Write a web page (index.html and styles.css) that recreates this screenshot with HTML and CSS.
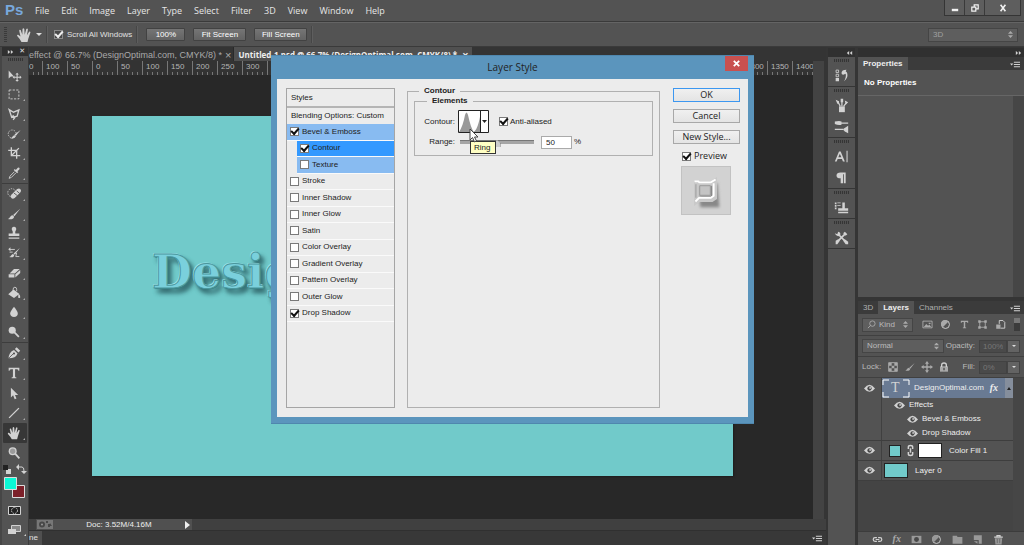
FILE: index.html
```html
<!DOCTYPE html>
<html lang="en">
<head>
<meta charset="utf-8">
<title>Photoshop - Layer Style</title>
<link rel="stylesheet" href="styles.css">
</head>
<body>
<svg class="sprite" aria-hidden="true">
<symbol id="move" viewBox="0 0 18 18"><path d="M3 4v9l2.500-2.300H9z"/><path d="M12.500 6.500l2 2h-1.400v2.400h2.400V9.500l2 2-2 2v-1.400h-2.400v2.400h1.400l-2 2-2-2h1.400v-2.400H9.500v1.400l-2-2 2-2v1.400h2.400V8.500h-1.400z"/></symbol>
<symbol id="marquee" viewBox="0 0 18 18"><rect class="line" x="3.500" y="4.500" width="11" height="10" stroke-dasharray="2.500 1.500"/></symbol>
<symbol id="lasso" viewBox="0 0 18 18"><path class="line thick" d="M3.500 4l5 3 6-2.500-2 7-6 1.500zM6.500 13l1.500-2 2 2-2 2.500"/></symbol>
<symbol id="quick" viewBox="0 0 18 18"><circle class="line" cx="7" cy="9" r="4.500" stroke-dasharray="1.500 1.300"/><path d="M16.500 4.500L11 11l-1.500-1.500zM10 10.300l1 1c-1 3-4 2.900-6 2.500 2-.5 2.500-3.500 5-3.500z"/></symbol>
<symbol id="crop" viewBox="0 0 18 18"><path class="line thick" d="M6 2.500V12h10M2.500 6H12v9.500M14.500 3.500l-8 8"/></symbol>
<symbol id="dropper" viewBox="0 0 18 18"><path d="M10 4.500l1 1 2.300-2.500q3-.5 1.700 2L12.800 7l1 1-1.300 1.300L8.700 5.700z"/><path class="line" d="M9.500 7.500l-5 5-1 2.500 2.500-1 5-5"/></symbol>
<symbol id="heal" viewBox="0 0 18 18"><circle class="line" cx="6.500" cy="7.500" r="4.500" stroke-dasharray="1.500 1.300"/><path d="M12.500 3.500q3-2 4.300 1 .5 1.500-1 3l-6 6q-3 2-4.500-1-.5-1.500 1-3z"/><path class="dark" d="M9 8l4 3M12 5.500l3.500 3"/></symbol>
<symbol id="brush" viewBox="0 0 18 18"><path d="M16 3L9.500 11.500 8 10zM7.500 10.300l1.700 1.700c-.7 3.300-4.500 3-7.200 2.500 2.500-.5 2.500-4 5.500-4.200z"/></symbol>
<symbol id="stamp" viewBox="0 0 18 18"><path d="M9 2a2.600 2.600 0 0 1 2 4.200Q10 7.500 10.500 9.500H15v3H3v-3h4.500Q8 7.500 7 6.200A2.600 2.600 0 0 1 9 2zM3 14h12v1.500H3z"/></symbol>
<symbol id="history" viewBox="0 0 18 18"><path d="M15.500 3.500L10 11l-1.500-1.300zM8 10l1.300 1.500C8.500 14.500 6 14 3.500 13.500 6 13 6 10 8 10z"/><path class="line" d="M4 5h6M4 8h3.500M12 9l-1 4h4"/><path d="M5 2.500V7L2.500 4.800z"/></symbol>
<symbol id="eraser" viewBox="0 0 18 18"><path d="M9 4.500h6.500L10 9.500H4zM3 10.500h6.500V14H3zM10.500 10.300L16 5.500v3.500l-5.500 5z"/></symbol>
<symbol id="bucket" viewBox="0 0 18 18"><path d="M8.500 5l6.500 5-6 4.500-6.500-4z"/><path class="line" d="M8 9V5q0-2.500 2-2.500T12 5v2"/><path d="M14 9.500q2.500 2 2 4.500-1.200 1.500-2.300 0z"/></symbol>
<symbol id="blur" viewBox="0 0 18 18"><path d="M9 3q4.500 5.500 4.300 8Q13 14.500 9 14.500T4.700 11Q4.500 8.500 9 3z"/></symbol>
<symbol id="dodge" viewBox="0 0 18 18"><circle cx="7" cy="7" r="4"/><path class="line fat" d="M9.500 9.500l5 5"/></symbol>
<symbol id="pen" viewBox="0 0 18 18"><path d="M3 15q0-7 6-9.500l4 4Q11 15 3 15zM10 4.500l2-2 4 4-2 2z"/><path class="dark" d="M3.500 14.500l5-5"/><circle class="hole" cx="9" cy="9.500" r="1.100"/></symbol>
<symbol id="type" viewBox="0 0 18 18"><path d="M3 3h12v3.500h-1Q13.900 4.800 12.500 4.800H10.200V13q0 1 1.500 1v1h-5.400v-1q1.500 0 1.500-1V4.800H5.500Q4.100 4.800 4 6.500H3z"/></symbol>
<symbol id="arrow" viewBox="0 0 18 18"><path d="M5.500 3v11l2.500-2.400L9.800 16l2-.8-1.700-4h3.600z"/></symbol>
<symbol id="line" viewBox="0 0 18 18"><path class="line thick" d="M3.500 14.500l11-11"/></symbol>
<symbol id="hand" viewBox="0 0 18 18"><path d="M6.500 16Q5 13 2.200 10q-.6-1.500 1-1.300L5.500 10.400 4.200 4.800q.1-1.500 1.500-.7l1.600 4.700L7.500 3q.8-1.400 1.800 0l.4 5.700L11.300 3q1.200-1 1.600.4l-1 5.800 2.200-3.500q1.300-.6 1.300.8l-2.100 6.300L12.500 16z"/></symbol>
<symbol id="zoom" viewBox="0 0 18 18"><circle cx="7.500" cy="7" r="4.500"/><circle class="hole" cx="7.500" cy="7" r="3" opacity=".4"/><path class="line fat" d="M10.500 10l4.500 5"/></symbol>
<symbol id="eye" viewBox="0 0 18 18"><path d="M0 9q9-12 18 0-9 11-18 0z"/><circle class="hole" cx="9" cy="9" r="3.500"/><circle cx="10" cy="8" r="1.500"/></symbol>
<symbol id="fold" viewBox="0 0 18 18"><path d="M8 3v12L1 9zM17 3v12l-7-6z"/></symbol>
<symbol id="panelmenu" viewBox="0 0 18 12"><path d="M0 4h6L3 8zM7 1h11v2H7zM7 5h11v2H7zM7 9h11v2H7z"/></symbol>
<symbol id="hist" viewBox="0 0 18 18"><path class="line" d="M2.500 2.500h3v3h-3zM2.500 7.500h3v3h-3z"/><path d="M2 12h4v4H2zM15 2Q9 2 9 6q0 2 2 2l3-1q1 4-2 9 5-4 4-9-.3-2-2-3z"/></symbol>
<symbol id="presets" viewBox="0 0 18 18"><path d="M6 10h7v7H6z"/><path class="line thick" d="M7.500 10L5 5M9.500 10V3M11.500 10l3-4"/><path d="M2 2l4 2v3H4zM8 1h3v4H8zM13 3l4 2-3 3z"/></symbol>
<symbol id="brushes" viewBox="0 0 18 18"><path class="line thick" d="M8 5h9M1 12.500h10"/><path d="M1 3q6-1 8 0v4Q5 8 1 6zM11 12l6-4v9q-5-2-6-4z"/></symbol>
<symbol id="char" viewBox="0 0 18 18"><path d="M1 15L6 3h2l5 12h-2.300l-1.200-3H4.400l-1.200 3zM5.200 10h3.600L7 5.700zM15 2h1.300v14H15z"/></symbol>
<symbol id="para" viewBox="0 0 18 18"><path d="M14 3v13h-2V5h-1v11H8v-6Q3 10 3 6.500T8 3z"/></symbol>
<symbol id="clone" viewBox="0 0 18 18"><path d="M10 3h3v7h4v3H5v-3h5zM5 14h12v2H5zM1 3h2v2H1zM1 6h2v2H1zM1 9h2v2H1zM4 3h4v1H4zM4 6h4v1H4z"/></symbol>
<symbol id="tools" viewBox="0 0 18 18"><path class="line fat" d="M4.500 4.500l10 10M14 4L5 13"/><path d="M1 4l3 1 1-3q4 1 2 5-4 2-6-3zM13 2l3 3-2 2-3-3zM2 13l3-2 2 2-3 4H2zM13 11l4 3v3h-3l-3-4z"/></symbol>
<symbol id="image" viewBox="0 0 18 18"><path class="line" d="M1.500 3.500h15v11h-15z"/><path d="M3 13l4-5 3 3 2-2 3 4zM11 6h3v2h-3z"/></symbol>
<symbol id="adjust" viewBox="0 0 18 18"><circle class="line thick" cx="9" cy="9" r="6.500"/><path d="M13.500 4.500A6.500 6.500 0 1 0 4.500 13.500z"/></symbol>
<symbol id="shape" viewBox="0 0 18 18"><path class="line" d="M4 4.500h10M4 13.500h10M4.500 4v10M13.500 4v10"/><path d="M2 2h4v4H2zM12 2h4v4h-4zM2 12h4v4H2zM12 12h4v4h-4z"/></symbol>
<symbol id="smart" viewBox="0 0 18 18"><path class="line thick" d="M7 8V2.500h6l3 3V15H9"/><path d="M2 9h7v7H2z"/></symbol>
<symbol id="checker" viewBox="0 0 18 18"><path class="line" d="M2.500 2.500h13v13h-13z"/><path d="M3 3h4v4H3zM11 3h4v4h-4zM7 7h4v4H7zM3 11h4v4H3zM11 11h4v4h-4z"/></symbol>
<symbol id="lock" viewBox="0 0 18 18"><path d="M3 8h12v8H3z"/><path class="line fat" d="M5.500 9V6Q5.500 3 9 3t3.500 3v3"/><path class="hole" d="M8 10h2v4H8z"/></symbol>
<symbol id="cross" viewBox="0 0 18 18"><path d="M9 0l3 4h-2v4h4V6l4 3-4 3v-2h-4v4h2l-3 4-3-4h2v-4H4v2L0 9l4-3v2h4V4H6z"/></symbol>
<symbol id="link" viewBox="0 0 18 18"><path class="line fat" d="M8 6H5Q2 6 2 9t3 3h3M10 6h3q3 0 3 3t-3 3h-3M6 9h6"/></symbol>
<symbol id="chain" viewBox="0 0 12 18"><path class="line fat" d="M3 7V4q0-2 3-2t3 2v3M3 11v3q0 2 3 2t3-2v-3M6 6v6"/></symbol>
<symbol id="mask" viewBox="0 0 18 18"><path d="M1 3h16v12H1z"/><circle class="hole" cx="9" cy="9" r="4"/></symbol>
<symbol id="folder" viewBox="0 0 18 18"><path d="M1 3h7l1 2h8v11H1z"/></symbol>
<symbol id="newlayer" viewBox="0 0 18 18"><path d="M3 2h13v14h-5v-6H3z"/><path d="M3 12h6v4z"/></symbol>
<symbol id="trash" viewBox="0 0 18 18"><path d="M3 7h12l-1 10H4z"/><path class="line fat" d="M2 5h14M6.500 4V2.500h5V4"/><path class="dark" d="M7 8v7M11 8v7"/></symbol>
</svg>

<div class="app">
<header class="menubar">
  <span class="logo">Ps</span>
  <nav class="menus"><a href="#">File</a><a href="#">Edit</a><a href="#">Image</a><a href="#">Layer</a><a href="#">Type</a><a href="#">Select</a><a href="#">Filter</a><a href="#">3D</a><a href="#">View</a><a href="#">Window</a><a href="#">Help</a></nav>
  <div class="winbuttons">
    <button aria-label="Minimize"><svg viewBox="0 0 10 10"><path d="M1 6h8v3H1z"/></svg></button>
    <button aria-label="Restore"><svg viewBox="0 0 10 10"><path class="line thick" d="M4 4V1h5v5H6M1 4h5v5H1z"/></svg></button>
    <button class="wide" aria-label="Close"><svg viewBox="0 0 10 10"><path class="line fat" d="M2 1l6 8M8 1L2 9"/></svg></button>
  </div>
</header>

<div class="options">
  <i class="vgrip"></i>
  <svg class="handicon"><use href="#hand"/></svg>
  <i class="caret"></i>
  <i class="rule"></i>
  <label class="scroll"><input type="checkbox" class="check darkcheck" checked>Scroll All Windows</label>
  <i class="rule"></i>
  <div class="optbuttons"><button class="opt small">100%</button><button class="opt">Fit Screen</button><button class="opt">Fill Screen</button></div>
  <i class="rule last"></i>
  <div class="sel workspace"><select aria-label="Workspace"><option>3D</option></select><i class="updown"></i></div>
</div>

<main class="main">
  <aside class="toolbar">
    <div class="strip toolstrip"><svg class="flip"><use href="#fold"/></svg><span>✕</span></div>
    <i class="grip"></i>
    <div class="tools g1">
      <button aria-label="Move"><svg><use href="#move"/></svg></button>
      <button class="more" aria-label="Marquee"><svg><use href="#marquee"/></svg></button>
      <button class="more" aria-label="Lasso"><svg><use href="#lasso"/></svg></button>
      <button class="more" aria-label="Quick Selection"><svg><use href="#quick"/></svg></button>
      <button class="more" aria-label="Crop"><svg><use href="#crop"/></svg></button>
      <button class="more" aria-label="Eyedropper"><svg><use href="#dropper"/></svg></button>
    </div>
    <div class="tools g2">
      <button class="more" aria-label="Healing Brush"><svg><use href="#heal"/></svg></button>
      <button class="more" aria-label="Brush"><svg><use href="#brush"/></svg></button>
      <button class="more" aria-label="Clone Stamp"><svg><use href="#stamp"/></svg></button>
      <button class="more" aria-label="History Brush"><svg><use href="#history"/></svg></button>
      <button class="more" aria-label="Eraser"><svg><use href="#eraser"/></svg></button>
      <button class="more" aria-label="Paint Bucket"><svg><use href="#bucket"/></svg></button>
      <button class="more" aria-label="Blur"><svg><use href="#blur"/></svg></button>
      <button class="more" aria-label="Dodge"><svg><use href="#dodge"/></svg></button>
    </div>
    <div class="tools g3">
      <button class="more" aria-label="Pen"><svg><use href="#pen"/></svg></button>
      <button class="more" aria-label="Type"><svg><use href="#type"/></svg></button>
      <button class="more" aria-label="Path Selection"><svg><use href="#arrow"/></svg></button>
      <button class="more" aria-label="Line"><svg><use href="#line"/></svg></button>
      <button class="more on" aria-label="Hand"><svg><use href="#hand"/></svg></button>
      <button aria-label="Zoom"><svg><use href="#zoom"/></svg></button>
    </div>
    <svg class="swatches" viewBox="0 0 26 76">
      <path d="M4 6h5v5H4z"/><path class="blk" d="M1 2h5v5H1z"/><path class="line" d="M16 4h4q2 0 2 4"/><path d="M17 1v6l-3-3zM19 8h6l-3 3z"/>
      <path class="back" d="M10.500 22.500h12v12h-12z"/><path class="front" d="M2.500 14.500h12v12h-12z"/>
      <path class="line" d="M6.500 43.500h12v8h-12z"/><path class="blk" d="M7 44h11v7H7z"/><circle class="line" cx="12.500" cy="47.500" r="3" stroke-dasharray="1.500 1"/>
      <path class="line" d="M9.500 62.500h9v6h-9z"/><path class="grey" d="M10 63h8v5h-8z"/><path d="M6 66h8v5H6zM24 71v2h-2z"/>
    </svg>
  </aside>

  <section class="document">
    <div class="tabs">
      <div class="tab">effect @ 66.7% (DesignOptimal.com, CMYK/8) *<span>×</span></div>
      <div class="tab active">Untitled-1.psd @ 66.7% (DesignOptimal.com, CMYK/8) *<span>×</span></div>
    </div>
    <div class="work">
      <div class="view">
        <div class="ruler"><b>0</b><b>100</b><b>50</b><b>0</b><b>50</b><b>100</b><b>150</b><b>200</b><b>250</b><b>300</b><b>350</b><b>400</b><b>450</b><b>500</b><b>550</b><b>600</b><b>650</b><b>700</b><b>750</b><b>800</b><b>850</b><b>900</b><b>950</b><b>1000</b><b>1050</b><b>1100</b><b>1150</b><b>1200</b><b>1250</b><b>1300</b><b>1350</b><b>1400</b></div>
        <div class="stage"><div class="canvas"><span class="art">Desig</span></div></div>
      </div>
      <div class="vscroll"></div>
    </div>
    <div class="status">
      <div class="info"><svg class="pager" viewBox="0 0 16 9"><circle class="hole" cx="5" cy="4.500" r="3"/><circle cx="5" cy="4.500" r="1"/><path class="hole" d="M9 1h2v2H9zM11 4h2v3h-2zM13 3l2 3h-3z"/></svg><span>Doc: 3.52M/4.16M</span><i class="play"></i></div>
    </div>
    <div class="timeline"><span>ne</span><svg class="pm"><use href="#panelmenu"/></svg></div>
  </section>

  <aside class="icons">
    <div class="strip"><svg><use href="#fold"/></svg></div>
    <div class="ig"><i class="grip"></i><svg><use href="#hist"/></svg></div>
    <div class="ig"><i class="grip"></i><svg><use href="#presets"/></svg><svg><use href="#brushes"/></svg></div>
    <div class="ig"><i class="grip"></i><svg><use href="#char"/></svg><svg><use href="#para"/></svg></div>
    <div class="ig"><i class="grip"></i><svg><use href="#clone"/></svg></div>
    <div class="ig"><i class="grip"></i><svg><use href="#tools"/></svg></div>
    <div class="ig"></div>
  </aside>

  <aside class="panels">
    <div class="strip"><svg class="flip"><use href="#fold"/></svg></div>
    <section class="properties">
      <div class="ptabs"><span class="cur">Properties</span><svg class="pm"><use href="#panelmenu"/></svg></div>
      <h2>No Properties</h2>
      <div class="pbody"></div>
    </section>
    <section class="layers">
      <div class="ptabs"><span>3D</span><span class="cur">Layers</span><span>Channels</span><svg class="pm"><use href="#panelmenu"/></svg></div>
      <div class="prow filter">
        <div class="sel kind"><svg viewBox="0 0 10 10"><circle class="line" cx="6" cy="4" r="3"/><path class="line" d="M4 6L1 9"/></svg><select aria-label="Filter"><option>Kind</option></select><i class="updown"></i></div>
        <div class="fi"><svg><use href="#image"/></svg><svg><use href="#adjust"/></svg><svg><use href="#type"/></svg><svg><use href="#shape"/></svg><svg><use href="#smart"/></svg></div>
        <i class="toggle"></i>
      </div>
      <div class="prow">
        <div class="sel blend"><select aria-label="Blend mode"><option>Normal</option></select><i class="updown"></i></div>
        <label class="pl" for="opacity">Opacity:</label><input id="opacity" class="num" value="100%"><button class="drop" aria-label="Opacity slider"><i class="caret"></i></button>
      </div>
      <div class="prow">
        <span>Lock:</span>
        <div class="locks"><svg><use href="#checker"/></svg><svg><use href="#brush"/></svg><svg><use href="#cross"/></svg><svg><use href="#lock"/></svg></div>
        <label class="pl" for="fill">Fill:</label><input id="fill" class="num" value="0%"><button class="drop" aria-label="Fill slider"><i class="caret"></i></button>
      </div>
      <div class="list">
        <div class="layer">
          <svg class="eye"><use href="#eye"/></svg>
          <div class="row selected"><svg class="ttype" viewBox="0 0 28 19"><path class="line" d="M1 6V1h6M21 1h6v5M27 13v5h-6M7 18H1v-5"/><text x="9" y="13">T</text></svg><span>DesignOptimal.com</span><em>fx</em><i class="up"></i></div>
        </div>
        <div class="layer effects">
          <span></span>
          <ul><li><svg><use href="#eye"/></svg>Effects</li><li class="sub"><svg><use href="#eye"/></svg>Bevel &amp; Emboss</li><li class="sub"><svg><use href="#eye"/></svg>Drop Shadow</li></ul>
        </div>
        <div class="layer">
          <svg class="eye"><use href="#eye"/></svg>
          <div class="row"><i class="fillthumb"></i><svg class="chain"><use href="#chain"/></svg><i class="thumb white"></i><span>Color Fill 1</span></div>
        </div>
        <div class="layer">
          <svg class="eye"><use href="#eye"/></svg>
          <div class="row"><i class="thumb"></i><span>Layer 0</span></div>
        </div>
      </div>
      <div class="pfoot"><svg><use href="#link"/></svg><em>fx</em><svg><use href="#mask"/></svg><svg><use href="#adjust"/></svg><svg><use href="#folder"/></svg><svg><use href="#newlayer"/></svg><svg><use href="#trash"/></svg></div>
    </section>
  </aside>
</main>
</div>

<div class="dialog" role="dialog" aria-labelledby="dtitle">
  <div class="titlebar"><h1 id="dtitle">Layer Style</h1><button class="close" aria-label="Close"><svg viewBox="0 0 10 10"><path class="line fat" d="M2 2l6 6M8 2L2 8"/></svg></button></div>
  <div class="dbody">
    <div class="styles">
      <div class="shead">Styles</div>
      <div class="sblend">Blending Options: Custom</div>
      <div class="srows">
        <label class="lit"><input type="checkbox" class="check" checked>Bevel &amp; Emboss</label>
        <label class="lit in picked"><input type="checkbox" class="check" checked>Contour</label>
        <label class="lit in"><input type="checkbox" class="check">Texture</label>
        <label><input type="checkbox" class="check">Stroke</label>
        <label><input type="checkbox" class="check">Inner Shadow</label>
        <label><input type="checkbox" class="check">Inner Glow</label>
        <label><input type="checkbox" class="check">Satin</label>
        <label><input type="checkbox" class="check">Color Overlay</label>
        <label><input type="checkbox" class="check">Gradient Overlay</label>
        <label><input type="checkbox" class="check">Pattern Overlay</label>
        <label><input type="checkbox" class="check">Outer Glow</label>
        <label><input type="checkbox" class="check" checked>Drop Shadow</label>
      </div>
    </div>
    <fieldset class="outer"><legend>Contour</legend>
      <fieldset class="inner"><legend>Elements</legend>
        <div class="frow tall"><span class="fl">Contour:</span>
          <button class="contour" aria-label="Contour"><svg viewBox="0 0 31 23"><path class="curve" d="M1 22Q5 16 7 5q1.500-5 3 0 3 14 6 17zM15 22q5-1 8-21v21z"/><path class="frame" d="M.500 .500h30v22H.500zM22.500 0v23"/><path class="blk" d="M24 10h5l-2.500 3z"/></svg></button>
          <label class="anti"><input type="checkbox" class="check" checked>Anti-aliased</label>
        </div>
        <div class="frow"><label class="fl" for="range">Range:</label><input id="range" class="range" type="range" value="50"><input class="val" aria-label="Range value" value="50"><span>%</span></div>
        <div class="tip">Ring</div>
        <svg class="cursor" viewBox="0 0 10 15"><path d="M1 1v11l2.500-2.500L5.500 14l2-1-2-4H9z"/></svg>
      </fieldset>
    </fieldset>
    <div class="actions">
      <button class="ok">OK</button><button>Cancel</button><button>New Style...</button>
      <label><input type="checkbox" class="check" checked>Preview</label>
      <svg class="sample" viewBox="0 0 50 49"><defs><filter id="soft"><feGaussianBlur stdDeviation="1.500"/></filter></defs><path class="sshadow" filter="url(#soft)" d="M17 20l20-3 2 25H19z"/><path class="sring" d="M15 17h16l3-2v17l-3 2H18l-3 2z"/><path class="score" d="M18 19h12v11H18z"/><path class="shi" d="M13 15h4l1 1h12l5-3M33 17v13l-3 2H18l-4 4"/><path class="slo" d="M18.500 19.500h11v10h-11zM14.500 18v14"/></svg>
    </div>
  </div>
</div>
</body>
</html>
```

FILE: styles.css
```css
* { box-sizing: border-box; }
body { margin: 0; background: #535353; color: #e0e0e0; font: 8px/12px "Liberation Sans", Arial, sans-serif; overflow: hidden; }
button, input, select { font: inherit; color: inherit; margin: 0; padding: 0; border: 0; background: none; border-radius: 0; }
svg { display: block; fill: #d2d2d2; flex: none; }
.sprite { position: absolute; width: 0; height: 0; }
.line { fill: none; stroke: #d2d2d2; stroke-width: 1; }
.thick { stroke-width: 1.5; }
.fat { stroke-width: 2; }
.dark { fill: none; stroke: #535353; }
.hole { fill: #484848; }
.blk { fill: #222; }
.app { min-height: 100vh; display: flex; flex-direction: column; }

.menubar { display: flex; height: 22px; align-items: flex-start; border-bottom: 1px solid #3a3a3a; }
.logo { width: 31px; padding-left: 5px; color: #78a8dc; font: bold 15px/20px "Liberation Sans", sans-serif; }
.menus { flex: 1; display: flex; gap: 12px; padding-left: 4px; font: 9px/21px "Open Sans", "Noto Sans", sans-serif; }
.menus a { color: #e6e6e6; text-decoration: none; }
.winbuttons { display: flex; margin-right: 3px; border: 1px solid #353535; border-top: 0; background: #5e5e5e; }
.winbuttons button { width: 20px; height: 15px; display: grid; place-items: center; border-right: 1px solid #3a3a3a; }
.winbuttons .wide { width: 35px; border: 0; }
.winbuttons svg { width: 8px; height: 8px; fill: #f2f2f2; }
.winbuttons .line { stroke: #f2f2f2; }

.options { display: flex; align-items: center; height: 25px; border-top: 1px solid #646464; border-bottom: 1px solid #3a3a3a; padding: 0 6px 0 4px; }
.vgrip { width: 3px; height: 16px; background: repeating-linear-gradient(#3a3a3a 0 1px, transparent 1px 2px); }
.handicon { width: 18px; height: 18px; margin-left: 8px; }
.caret { border: 3px solid transparent; border-top-color: #ddd; border-bottom: 0; }
.options > .caret { margin-left: 3px; }
.rule { width: 2px; height: 17px; margin: 0 6px 0 4px; background: #464646; border-right: 1px solid #5e5e5e; }
.scroll { display: flex; align-items: center; gap: 4px; }
.optbuttons { display: flex; gap: 8px; padding-left: 2px; }
.opt { width: 53px; height: 13px; line-height: 11px; background: linear-gradient(#757575, #636363); border: 1px solid #424242; border-radius: 1px; color: #fff; }
.opt.small { width: 39px; }
.workspace { width: 90px; margin-left: auto; color: #a0a0a0; }
.sel { position: relative; display: flex; align-items: center; height: 14px; padding: 0 4px; background: #5e5e5e; border: 1px solid #454545; }
.sel select { appearance: none; flex: 1; min-width: 0; line-height: 12px; outline: 0; }
.updown { width: 5px; height: 7px; clip-path: polygon(50% 0, 100% 40%, 0 40%, 0 60%, 100% 60%, 50% 100%, 0 60%, 0 40%); background: #aaa; }

.check { appearance: none; width: 9px; height: 9px; border: 1px solid #7a7a7a; background: #fff; display: grid; place-items: center; flex: none; }
.check:checked::before { content: ""; width: 6px; height: 3px; border: solid #111; border-width: 0 0 2px 2px; transform: rotate(-48deg); margin-bottom: 2px; }
.darkcheck { background: #4a4a4a; border-color: #8a8a8a; }
.darkcheck:checked::before { border-color: #eee; }

.main { flex: 1; display: grid; grid-template-columns: 29px minmax(0, 1fr) 31px 167px; background: #3a3a3a; }
.strip { height: 9px; background: #303030; display: flex; justify-content: flex-end; align-items: center; padding-right: 2px; }
.strip svg { width: 7px; height: 6px; }
.flip { transform: scaleX(-1); }
.toolbar { background: #535353; border-left: 2px solid #464646; border-right: 1px solid #3b3b3b; }
.toolstrip { justify-content: space-between; padding: 0 3px 0 5px; font: 7px/9px "DejaVu Sans", sans-serif; }
.grip { display: block; width: 15px; height: 3px; margin: 2px auto 0; background: repeating-linear-gradient(90deg, #353535 0 1px, #505050 1px 2px); }
.tools { display: grid; grid-auto-rows: 1fr; padding: 0 1px; }
.tools + .tools { border-top: 1px solid #3d3d3d; }
.g1 { height: 118px; margin-top: 4px; }
.g2 { height: 159px; }
.g3 { height: 121px; }
.tools button { position: relative; display: grid; place-items: center; }
.tools svg { width: 16px; height: 16px; margin-right: 2px; }
.tools .on { background: #373737; border-radius: 1px; }
.more::after { content: ""; position: absolute; right: 2px; bottom: 3px; border: 1px solid #aaa; border-top-color: transparent; border-left-color: transparent; }
.swatches { width: 26px; height: 76px; }
.front { fill: #0cf7d5; stroke: #ddd; }
.back { fill: #7c2029; stroke: #ddd; }
.grey { fill: #888; }

.document { display: flex; flex-direction: column; min-width: 0; }
.tabs { display: flex; height: 14px; font-size: 9px; line-height: 16px; white-space: nowrap; overflow: hidden; background: #343434; }
.tab { display: flex; gap: 3px; padding-right: 2px; color: #a9a9a9; }
.tab.active { font: bold 8px/16px "Open Sans", "Noto Sans", sans-serif; gap: 5px; background: #505050; color: #eee; padding: 0 4px; border-left: 1px solid #2a2a2a; }
.tab span { font-size: 11px; }
.work { flex: 1; display: flex; min-height: 0; }
.view { flex: 1; min-width: 0; background: #282828; }
.vscroll { width: 13px; background: #434343; border-right: 2px solid #353535; }
.ruler { display: flex; height: 14px; overflow: hidden; background: #333; color: #b5b5b5; }
.ruler b { flex: none; width: 25px; padding-left: 3px; font-weight: normal; line-height: 11px; border-left: 1px solid #777; background: repeating-linear-gradient(90deg, #777 0 1px, transparent 1px 5px) 4px bottom/100% 3px no-repeat; }
.ruler b:first-child { width: 13px; padding: 0; border: 0; }
.stage { padding: 41px 80px 43px 63px; }
.canvas { height: 360px; overflow: hidden; background: #71caca; box-shadow: 1px 1px 2px #1c1c1c; padding: 126px 0 0 60px; }
.art { display: block; font: bold 46px/60px "DejaVu Serif", serif; color: #7ad0dc; -webkit-text-stroke: 1px #4a979d; text-shadow: -1px -1px 0 #9de4ec, 1px 1px 1px #347c80, 3px 4px 4px #397276, 4px 5px 5px #3f8184; white-space: nowrap; }
.status { height: 12px; padding-left: 7px; background: #404040; border-bottom: 1px solid #303030; }
.info { width: 156px; height: 11px; display: flex; align-items: center; justify-content: space-between; padding: 0 2px 0 1px; background: #505050; line-height: 11px; color: #eee; }
.pager { width: 16px; height: 9px; background: #777; fill: #999; }
.play { border: 4px solid transparent; border-left: 5px solid #eee; border-right: 0; }
.timeline { height: 15px; display: flex; justify-content: space-between; align-items: center; padding-right: 4px; background: #383838; border-bottom: 1px solid #555; }
.timeline span { width: 13px; background: #505050; line-height: 14px; }
.pm { width: 10px; height: 7px; }

.icons { padding: 1px 2px 0; background: #353535; display: flex; flex-direction: column; }
.ig { display: grid; justify-items: center; gap: 6px; padding-bottom: 3px; margin-bottom: 1px; background: #535353; }
.ig svg { width: 15px; height: 15px; }
.ig:last-child { flex: 1; }
.icons .strip { flex: none; }

.panels { display: flex; flex-direction: column; background: #353535; padding: 1px 0 0 1px; }
.ptabs { display: flex; height: 13px; line-height: 13px; background: #3b3b3b; color: #b0b0b0; padding-right: 4px; }
.ptabs span { padding: 0 5px; }
.ptabs .cur { background: #535353; color: #eee; font-weight: bold; }
.ptabs .pm { margin: 4px 0 0 auto; }
.properties { flex: 1; display: flex; flex-direction: column; margin-bottom: 4px; background: #535353; }
.properties h2 { margin: 0; padding-left: 6px; font-size: 8px; line-height: 25px; color: #fff; border-bottom: 1px solid #666; }
.pbody { flex: 1; border-right: 11px solid #464646; }
.layers { background: #535353; }
.prow { display: flex; align-items: center; height: 21px; padding: 0 4px; border-bottom: 1px solid #404040; color: #bbb; }
.filter { height: 22px; }
.kind { width: 51px; gap: 3px; }
.kind svg { width: 9px; height: 9px; }
.fi { flex: 1; display: flex; justify-content: space-between; padding: 0 8px 0 9px; }
.fi svg { width: 11px; height: 11px; fill: #aaa; }
.toggle { width: 6px; height: 13px; background: linear-gradient(#777 35%, #3b3b3b 35%); }
.blend { width: 82px; }
.pl { margin-left: auto; padding-right: 4px; }
.num { width: 28px; height: 13px; padding: 0 3px; background: #4a4a4a; border: 1px solid #424242; color: #777; }
.drop { width: 13px; height: 13px; display: grid; place-items: center; background: #636363; border: 1px solid #444; }
.drop .caret { border-width: 2px 2px 0; }
.locks { display: flex; gap: 5px; padding-left: 6px; }
.locks svg { width: 12px; height: 12px; fill: #aaa; }
.list { height: 153px; background: #444; border-right: 11px solid #464646; }
.layer { display: grid; grid-template-columns: 23px 1fr; min-height: 20px; background: #535353; border-bottom: 1px solid #3e3e3e; }
.layer:first-child { border: 0; }
.eye { width: 11px; height: 11px; align-self: center; justify-self: center; }
.row { display: flex; align-items: center; border-left: 1px solid #404040; color: #eee; }
.selected { background: #697a93; }
.ttype { width: 28px; height: 19px; }
.layers .line { stroke: #aaa; }
.layers .ttype .line { stroke: #fff; }
.ttype text { font: 14px "Liberation Serif", serif; }
.selected span { margin-left: 4px; }
.row em, .pfoot em { font: italic bold 10px/12px "Liberation Serif", serif; }
.row em { margin-left: auto; margin-right: 7px; }
.up { align-self: stretch; width: 8px; background: #858e9c; display: grid; place-items: center; }
.up::before { content: ""; border: 2px solid transparent; border-top: 0; border-bottom: 3px solid #222; }
.layer ul { margin: 0; padding: 0 0 0 12px; list-style: none; border-left: 1px solid #404040; }
.layer li { display: flex; align-items: center; gap: 4px; height: 14px; color: #eee; }
.layer li svg { width: 11px; height: 11px; }
.layer .sub { padding-left: 13px; }
.thumb { width: 24px; height: 15px; margin: 0 7px 0 2px; background: #71caca; border: 1px solid #222; }
.thumb.white { margin-left: 0; background: #fff; }
.fillthumb { width: 12px; height: 12px; margin-left: 7px; background: #71caca; border: 1px solid #222; }
.chain { width: 9px; height: 13px; margin: 0 3px 0 5px; }
.pfoot { height: 15px; display: flex; align-items: center; justify-content: space-between; padding: 0 20px 0 14px; color: #aaa; border-top: 1px solid #3c3c3c; }
.pfoot svg { width: 11px; height: 11px; fill: #999; }

.dialog { position: absolute; left: 271px; top: 55px; width: 483px; padding: 0 6px 6px; background: #5b95bd; border: 1px solid #4f87ae; border-width: 1px 0; color: #222; }
.titlebar { position: relative; height: 23px; }
.titlebar h1 { margin: 0; text-align: center; font: 10px/22px "Open Sans", "Noto Sans", sans-serif; }
.close { position: absolute; right: 0; top: 0; width: 23px; height: 15px; background: #c9504f; display: grid; place-items: center; }
.close svg { width: 9px; height: 9px; }
.close .line { stroke: #fff; }
.dbody { display: grid; grid-template-columns: 109px 1fr 67px; column-gap: 13px; min-height: 338px; padding: 9px 8px 9px 9px; background: #ececec; }
.styles { border: 1px solid #a5a5a5; }
.shead, .sblend { padding-left: 4px; line-height: 17px; }
.sblend { line-height: 16px; }
.shead { border-bottom: 2px solid #b5b5b5; }
.srows { display: grid; grid-auto-rows: 1fr; height: 198px; }
.srows label { display: flex; align-items: center; gap: 3px; padding-left: 3px; border-bottom: 1px solid #fafafa; }
.srows .lit { background: #88bbf1; }
.srows .in { margin-left: 10px; }
.srows .picked { background: #3399ff; }
fieldset { min-width: 0; margin: 0; border: 1px solid #b0b0b0; }
legend { padding: 0 5px; font-weight: bold; line-height: 10px; }
.outer { padding: 0 6px; margin-top: -2px; margin-left: -1px; }
.outer > legend { margin-left: 5px; }
.inner { position: relative; padding: 3px 7px 5px; }
.inner > legend { margin-left: 5px; }
.frow { display: flex; align-items: center; height: 16px; }
.frow.tall { height: 25px; }
.fl { width: 33px; margin-right: 3px; text-align: right; }
.contour { width: 31px; height: 23px; background: #fff; }
.contour svg { width: 31px; height: 23px; }
.curve { fill: #999; }
.frame { fill: none; stroke: #222; }
.anti { display: flex; align-items: center; gap: 2px; margin-left: 10px; }
.range { appearance: none; background: none; width: 74px; height: 12px; margin: 0 7px 0 2px; outline: 0; }
.range::-webkit-slider-runnable-track { height: 4px; background: #a5a5a5; border-top: 1px solid #777; }
.range::-webkit-slider-thumb { appearance: none; width: 7px; height: 7px; margin-top: -1px; background: linear-gradient(90deg, #777 1px, #ccc 1px 6px, #777 6px); clip-path: polygon(50% 0, 100% 50%, 100% 100%, 0 100%, 0 50%); }
.val { width: 31px; height: 13px; padding: 0 4px; background: #fff; border: 1px solid #aaa; margin-right: 2px; }
.tip { position: absolute; left: 55px; top: 35px; width: 26px; height: 13px; padding-left: 3px; line-height: 11px; background: #ffffc4; border: 1px solid #333; }
.cursor { position: absolute; left: 54px; top: 22px; width: 10px; height: 15px; fill: #fff; stroke: #444; }
.actions { display: flex; flex-direction: column; gap: 7px; font: 9px/12px "Open Sans", "Noto Sans", sans-serif; }
.actions button { height: 14px; line-height: 12px; border: 1px solid #a8a8a8; background: linear-gradient(#f0f0f0, #e4e4e4); }
.actions .ok { border-color: #3c97f0; }
.actions label { display: flex; align-items: center; gap: 3px; margin-left: 9px; line-height: 10px; }
.sample { width: 50px; height: 49px; margin: -2px 0 0 8px; background: #d2d2d2; border: 1px solid #c2c2c2; }
.sshadow { fill: #888; }
.sring { fill: none; stroke: #c9c9c9; stroke-width: 5; }
.score { fill: #c4c4c4; }
.shi { fill: none; stroke: #fff; stroke-width: 2; }
.slo { fill: none; stroke: #999; }
```
